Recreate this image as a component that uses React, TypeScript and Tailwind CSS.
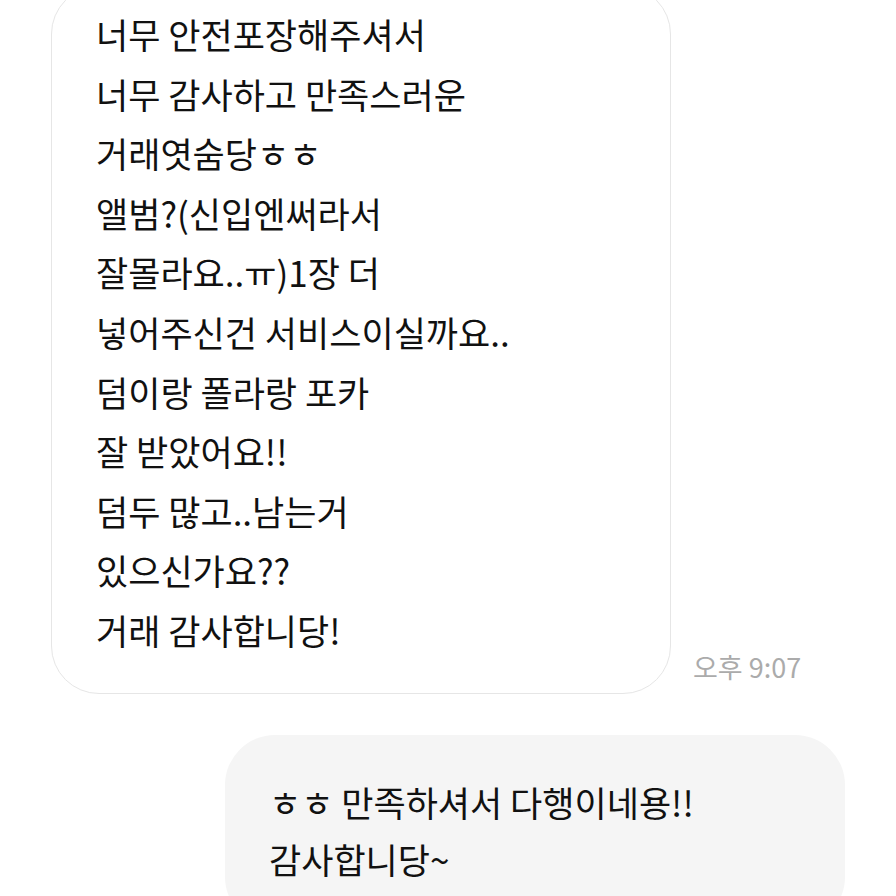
import React from 'react';

const FONT = "font-['Noto_Sans_CJK_KR','Noto_Sans',sans-serif]";

const receivedLines = [
  '너무 안전포장해주셔서',
  '너무 감사하고 만족스러운',
  '거래엿숨당ㅎㅎ',
  '앨범?(신입엔써라서',
  '잘몰라요..ㅠ)1장 더',
  '넣어주신건 서비스이실까요..',
  '덤이랑 폴라랑 포카',
  '잘 받았어요!!',
  '덤두 많고..남는거',
  '있으신가요??',
  '거래 감사합니당!',
];

const sentLines = ['ㅎㅎ 만족하셔서 다행이네용!!', '감사합니당~'];

const App: React.FC = () => {
  return (
    <div className={`h-[896px] w-[896px] overflow-hidden bg-white ${FONT}`}>
      {/* received message */}
      <div className="flex items-end pl-[51px] -mt-[14px]">
        <div className="w-[620px] shrink-0 rounded-[48px] border-[1.5px] border-[#e6e6e6] bg-white pl-[44px] pt-[17px] pb-[33px]">
          {receivedLines.map((line) => (
            <div key={line} className="h-[59.6px] text-[35px] leading-[59.6px] text-[#111111]">
              {line}
            </div>
          ))}
        </div>
        <div className="ml-[22px] mb-[14px] whitespace-nowrap text-[27px] leading-none text-[#ababab]">오후 9:07</div>
      </div>

      {/* sent message */}
      <div className="mt-[41px] flex justify-end pr-[51px]">
        <div className="w-[620px] rounded-[50px] bg-[#f5f5f5] pl-[44px] pt-[38px] pb-[40px]">
          {sentLines.map((line) => (
            <div key={line} className="h-[57px] text-[35px] leading-[57px] text-[#111111]">
              {line}
            </div>
          ))}
        </div>
      </div>
    </div>
  );
};

export default App;
